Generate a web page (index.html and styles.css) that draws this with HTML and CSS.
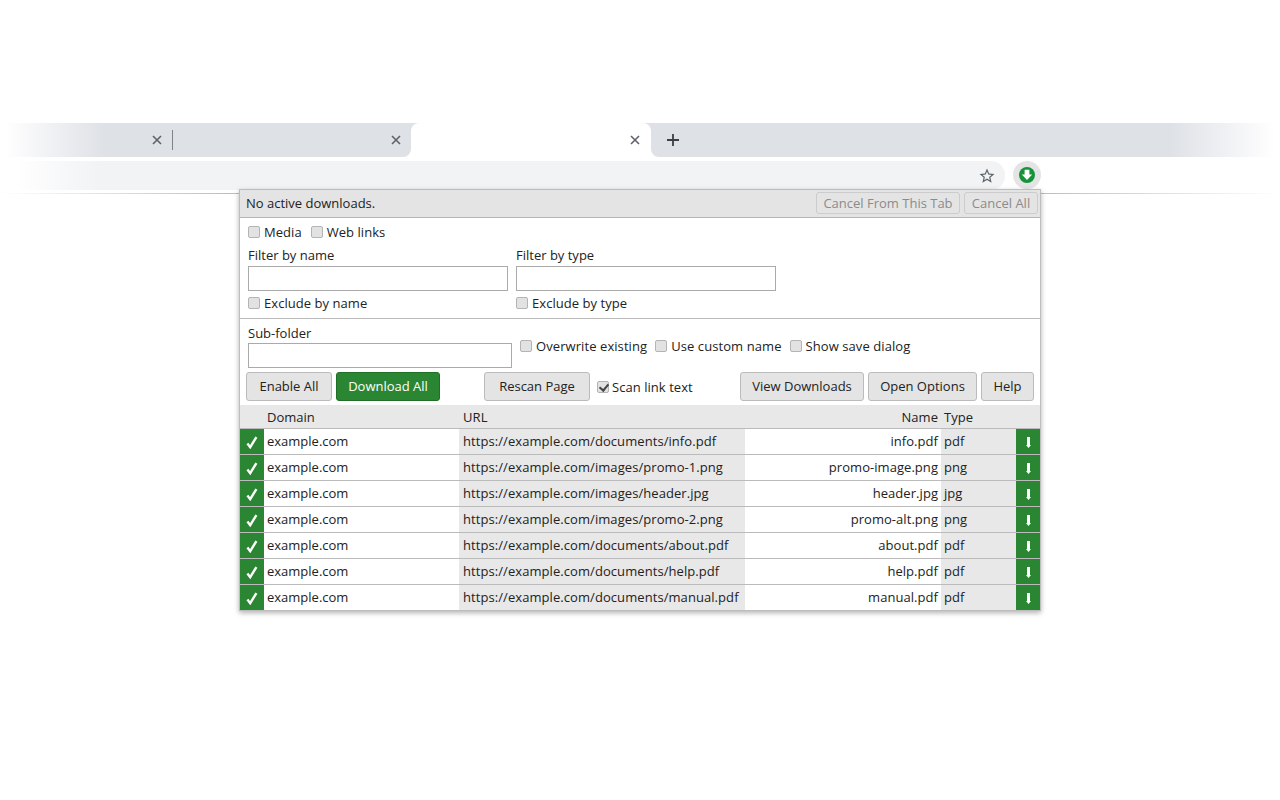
FILE: index.html
```html
<!DOCTYPE html>
<html lang="en">
<head>
<meta charset="utf-8">
<title>Downloads</title>
<link rel="stylesheet" href="styles.css">
</head>
<body>
<svg class="defs" aria-hidden="true">
  <symbol id="i-check" viewBox="0 0 12 13"><path d="M1.4 7.6 4.2 11.2 10.4 1.2" fill="none" stroke="#fff" stroke-width="2.4"/></symbol>
  <symbol id="i-down" viewBox="0 0 5 11"><path d="M1 0h3v8h1L2.5 11 0 8h1z" fill="#fff"/></symbol>
</svg>
<header class="chrome">
  <div class="tabstrip">
    <div class="strip strip-left">
      <div class="tab tab-first"><svg class="x" viewBox="0 0 10 10"><path d="M1 1l8 8M9 1l-8 8"/></svg></div>
      <div class="tab-sep"></div>
      <div class="tab tab-second"><svg class="x" viewBox="0 0 10 10"><path d="M1 1l8 8M9 1l-8 8"/></svg></div>
    </div>
    <div class="tab-slot"><div class="tab-active"><svg class="x" viewBox="0 0 10 10"><path d="M1 1l8 8M9 1l-8 8"/></svg></div></div>
    <div class="strip strip-right"><svg class="plus" viewBox="0 0 12 12"><path d="M6 0v12M0 6h12"/></svg></div>
  </div>
  <div class="toolbar">
    <div class="omnibox"><svg class="star" viewBox="0 0 24 24"><path d="M22 9.24l-7.19-.62L12 2 9.19 8.63 2 9.24l5.46 4.73L5.82 21 12 17.27 18.18 21l-1.63-7.03L22 9.24zM12 15.4l-3.76 2.27 1-4.28-3.32-2.88 4.38-.38L12 6.1l1.71 4.04 4.38.38-3.32 2.88 1 4.28L12 15.4z"/></svg></div>
    <div class="ext"><svg class="ext-icon" viewBox="0 0 16 16"><circle cx="8" cy="8" r="8" fill="#149339"/><path d="M5.6 2.8h4.8v4.6h2.8L8 13 2.8 7.4h2.8z" fill="#fff"/></svg></div>
  </div>
  <div class="toolbar-line"></div>
</header>

<main class="popup">
  <div class="status">
    <span>No active downloads.</span>
    <div class="status-btns">
      <button class="btn btn-off w-cancel-tab">Cancel From This Tab</button>
      <button class="btn btn-off w-cancel-all">Cancel All</button>
    </div>
  </div>

  <section class="filters">
    <div class="row-checks">
      <label class="chk"><input type="checkbox"><span>Media</span></label>
      <label class="chk"><input type="checkbox"><span>Web links</span></label>
    </div>
    <div class="filter-cols">
      <div class="filter-col">
        <div class="lbl">Filter by name</div>
        <input class="txt" type="text">
        <label class="chk"><input type="checkbox"><span>Exclude by name</span></label>
      </div>
      <div class="filter-col">
        <div class="lbl">Filter by type</div>
        <input class="txt" type="text">
        <label class="chk"><input type="checkbox"><span>Exclude by type</span></label>
      </div>
    </div>
  </section>

  <section class="options">
    <div class="sub">
      <div class="lbl">Sub-folder</div>
      <input class="txt txt-sub" type="text">
    </div>
    <div class="opt-checks">
      <label class="chk"><input type="checkbox"><span>Overwrite existing</span></label>
      <label class="chk"><input type="checkbox"><span>Use custom name</span></label>
      <label class="chk"><input type="checkbox"><span>Show save dialog</span></label>
    </div>
  </section>

  <section class="actions">
    <button class="btn btn-act w-enable">Enable All</button>
    <button class="btn btn-act btn-green w-download">Download All</button>
    <button class="btn btn-act w-rescan">Rescan Page</button>
    <label class="chk chk-scan"><input type="checkbox" checked><span>Scan link text</span></label>
    <button class="btn btn-act w-view">View Downloads</button>
    <button class="btn btn-act w-options">Open Options</button>
    <button class="btn btn-act w-help">Help</button>
  </section>

  <div class="grid">
    <div class="grow ghead">
      <div class="c-on"></div><div class="c-domain">Domain</div><div class="c-url">URL</div><div class="c-name">Name</div><div class="c-type">Type</div><div class="c-dl"></div>
    </div>
    <div class="grow"><div class="c-on"><svg class="ic-check"><use href="#i-check"/></svg></div><div class="c-domain">example.com</div><div class="c-url">https://example.com/documents/info.pdf</div><div class="c-name">info.pdf</div><div class="c-type">pdf</div><div class="c-dl"><svg class="ic-down"><use href="#i-down"/></svg></div></div>
    <div class="grow"><div class="c-on"><svg class="ic-check"><use href="#i-check"/></svg></div><div class="c-domain">example.com</div><div class="c-url">https://example.com/images/promo-1.png</div><div class="c-name">promo-image.png</div><div class="c-type">png</div><div class="c-dl"><svg class="ic-down"><use href="#i-down"/></svg></div></div>
    <div class="grow"><div class="c-on"><svg class="ic-check"><use href="#i-check"/></svg></div><div class="c-domain">example.com</div><div class="c-url">https://example.com/images/header.jpg</div><div class="c-name">header.jpg</div><div class="c-type">jpg</div><div class="c-dl"><svg class="ic-down"><use href="#i-down"/></svg></div></div>
    <div class="grow"><div class="c-on"><svg class="ic-check"><use href="#i-check"/></svg></div><div class="c-domain">example.com</div><div class="c-url">https://example.com/images/promo-2.png</div><div class="c-name">promo-alt.png</div><div class="c-type">png</div><div class="c-dl"><svg class="ic-down"><use href="#i-down"/></svg></div></div>
    <div class="grow"><div class="c-on"><svg class="ic-check"><use href="#i-check"/></svg></div><div class="c-domain">example.com</div><div class="c-url">https://example.com/documents/about.pdf</div><div class="c-name">about.pdf</div><div class="c-type">pdf</div><div class="c-dl"><svg class="ic-down"><use href="#i-down"/></svg></div></div>
    <div class="grow"><div class="c-on"><svg class="ic-check"><use href="#i-check"/></svg></div><div class="c-domain">example.com</div><div class="c-url">https://example.com/documents/help.pdf</div><div class="c-name">help.pdf</div><div class="c-type">pdf</div><div class="c-dl"><svg class="ic-down"><use href="#i-down"/></svg></div></div>
    <div class="grow"><div class="c-on"><svg class="ic-check"><use href="#i-check"/></svg></div><div class="c-domain">example.com</div><div class="c-url">https://example.com/documents/manual.pdf</div><div class="c-name">manual.pdf</div><div class="c-type">pdf</div><div class="c-dl"><svg class="ic-down"><use href="#i-down"/></svg></div></div>
  </div>
</main>
</body>
</html>
```
FILE: styles.css
```css
* { box-sizing: border-box; }
html, body { margin: 0; height: 800px; overflow: hidden; background: #fff; }
body { font-family: "Open Sans", "Noto Sans", sans-serif; font-size: 13px; color: #222; position: relative; }
.defs { display: none; }

.chrome { padding-top: 123px; }
.tabstrip { display: flex; height: 34px; }
.strip { height: 34px; display: flex; align-items: center; }
.strip-left { width: 411px; border-bottom-right-radius: 8px; background: linear-gradient(90deg, #fff 5px, #dee1e6 105px); }
.strip-right { flex: 1; border-bottom-left-radius: 8px; background: linear-gradient(270deg, #fff 5px, #dee1e6 110px); padding-left: 16px; }
.tab { display: flex; align-items: center; justify-content: flex-end; }
.tab-first { width: 162px; }
.tab-sep { width: 1px; height: 20px; background: #7f8388; margin-left: 10px; }
.tab-second { width: 228px; }
.tab-slot { width: 240px; height: 34px; background: linear-gradient(#dee1e6 8px, #fff 8px); }
.tab-active { height: 34px; display: flex; align-items: center; justify-content: flex-end; padding-right: 11px; background: #fff; border-radius: 8px 8px 0 0; }
.x { width: 10px; height: 10px; fill: none; stroke: #5f6368; stroke-width: 1.6; display: block; }
.plus { width: 12px; height: 12px; fill: none; stroke: #3c4043; stroke-width: 1.8; display: block; }
.toolbar { margin-top: 4px; height: 29px; display: flex; gap: 8px; }
.omnibox { width: 1005px; height: 29px; background: linear-gradient(90deg, #fff 15px, #f1f3f4 100px); border-radius: 0 14px 14px 0; display: flex; align-items: center; justify-content: flex-end; padding-right: 9px; }
.star { width: 18px; height: 18px; fill: #5f6368; display: block; }
.ext { width: 28px; height: 28px; border-radius: 50%; background: #e4e4e4; display: flex; align-items: center; justify-content: center; }
.ext-icon { width: 16px; height: 16px; display: block; }
.toolbar-line { height: 1px; margin-top: 3px; background: linear-gradient(90deg, #fff 0, #bdbdbd 230px, #bdbdbd 1040px, #fff 1280px); }

.popup { position: absolute; left: 239px; top: 189px; width: 802px; height: 422px; border: 1px solid #bdbdbd; background: #fff; box-shadow: 0 2px 5px rgba(0,0,0,.3); }
.status { height: 28px; padding: 0 2px 1px 6px; background: #e4e4e4; border-bottom: 1px solid #b5b5b5; display: flex; align-items: center; justify-content: space-between; }
.status-btns { display: flex; gap: 4px; }
.btn { font: inherit; color: #222; background: #e4e4e4; border: 1px solid #bbb; border-radius: 3px; padding: 0; white-space: nowrap; }
.btn-off { height: 22px; color: #8b8b8b; border-color: #ccc; }
.w-cancel-tab { width: 144px; }
.w-cancel-all { width: 74px; }

.filters { height: 101px; padding: 5px 8px 0; border-bottom: 1px solid #bbb; }
.row-checks { display: flex; gap: 9px; height: 18px; }
.chk { display: inline-flex; align-items: center; gap: 4px; white-space: nowrap; letter-spacing: .05px; }
.chk input { appearance: none; position: relative; margin: 0; width: 12px; height: 12px; background: #e2e2e2; border: 1px solid #b4b4b4; border-radius: 2px; }
.chk input:checked::after { content: ""; position: absolute; left: 3px; top: 0; width: 4px; height: 7px; border: solid #444; border-width: 0 2px 2px 0; transform: rotate(40deg); }
.filter-cols { display: flex; gap: 8px; margin-top: 5px; }
.filter-col { width: 260px; display: flex; flex-direction: column; align-items: flex-start; }
.lbl { height: 18px; line-height: 18px; }
.txt { display: block; width: 260px; height: 25px; margin: 2px 0 3px; border: 1px solid #aaa; background: #fff; padding: 0 4px; }

.options { height: 53px; display: flex; padding: 5px 8px 0; }
.sub { width: 264px; }
.txt-sub { width: 264px; margin: 1px 0 0; }
.opt-checks { display: flex; gap: 8px; margin: 13px 0 0 8px; height: 18px; letter-spacing: .08px; }
.opt-checks .chk { letter-spacing: .08px; }

.actions { height: 33px; display: flex; align-items: flex-start; padding: 0 6px; gap: 4px; }
.btn-act { height: 29px; padding-bottom: 2px; }
.btn-green { background: #2a8632; color: #fff; border-color: #1f6f27; }
.w-enable { width: 86px; }
.w-download { width: 104px; }
.w-rescan { width: 106px; margin-left: 40px; }
.w-view { width: 124px; }
.w-options { width: 109px; }
.w-help { width: 53px; }
.chk-scan { height: 29px; gap: 3px; margin: 0 42px 0 3px; width: 97px; }

.grid { display: flex; flex-direction: column; }
.grow { display: flex; height: 26px; line-height: 25px; border-bottom: 1px solid #bbb; }
.grow:last-child { height: 25px; border-bottom: 0; }
.ghead { height: 24px; line-height: 25px; background: #e8e8e8; }
.c-on { width: 24px; background: #2a8632; display: flex; align-items: center; justify-content: center; }
.c-domain { width: 195px; padding-left: 3px; }
.c-url { width: 286px; padding-left: 4px; background: #e8e8e8; white-space: nowrap; letter-spacing: .07px; }
.c-name { width: 196px; padding-right: 3px; text-align: right; letter-spacing: .05px; }
.c-type { width: 75px; padding-left: 3px; background: #e8e8e8; }
.c-dl { width: 24px; background: #2a8632; display: flex; align-items: center; justify-content: center; }
.ghead .c-on, .ghead .c-dl, .ghead .c-url, .ghead .c-type { background: transparent; }
.ic-check { width: 12px; height: 13px; margin-top: 1px; display: block; }
.ic-down { width: 5px; height: 11px; margin-top: 2px; display: block; }
```
